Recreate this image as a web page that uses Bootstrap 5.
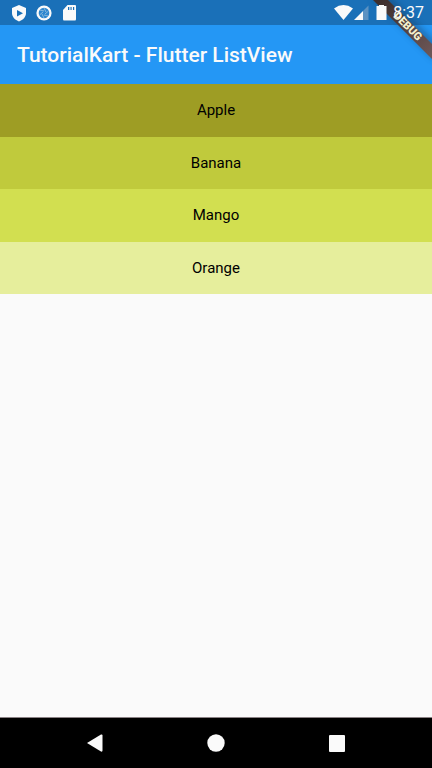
<!DOCTYPE html>
<html lang="en">
<head>
<meta charset="utf-8">
<meta name="viewport" content="width=device-width, initial-scale=1">
<title>TutorialKart - Flutter ListView</title>
<link href="https://cdn.jsdelivr.net/npm/bootstrap@5.3.0/dist/css/bootstrap.min.css" rel="stylesheet">
<style>
  body { font-family: Roboto, "Liberation Sans", sans-serif; background: #fafafa; color: #000; }
  .status-bar { height: 25px; background: #1a70b8; padding: 0 8px 0 11px; color: #fafafa; }
  .status-time { font-size: 16px; line-height: 25px; font-weight: 400; }
  .status-icons { gap: 9px; }
  .status-right { gap: 6px; z-index: 2; }
  .app-bar { height: 59px; background: #2497f5; padding: 0 17px; }
  .app-title { font-size: 21px; line-height: 24px; font-weight: 500; color: #fafafa; }
  .fruit-list { height: 210px; font-size: 15px; line-height: 20px; }
  .fruit-list .list-group-item { color: #000; }
  .fruit-list .lime-900 { background: #9e9d24; }
  .fruit-list .lime-600 { background: #c0ca3c; }
  .fruit-list .lime-400 { background: #d2df50; }
  .fruit-list .lime-200 { background: #e6ee9c; }
  .nav-keys { height: 51px; background: #000; border-top: 1px solid #8a8184; padding: 0 34px; }
  .nav-key { background: transparent; }
  .debug-banner { z-index: 1; pointer-events: none; }
  svg { display: block; }
</style>
</head>
<body>
<div class="d-flex flex-column min-vh-100 position-relative overflow-hidden">
  <div class="status-bar d-flex align-items-center justify-content-between">
    <div class="status-icons d-flex align-items-center">
      <svg width="16" height="18" viewBox="0 0 16 18" aria-hidden="true"><path fill="#fafafa" d="M8 1 15 4V9C15 13 12 16 8 17.500C4 16 1 13 1 9V4Z"/><path fill="#1a70b8" d="M6 6 12 9.300 6 12.500Z"/></svg>
      <svg width="16" height="16" viewBox="0 0 16 16" aria-hidden="true"><circle cx="8" cy="8" r="7.600" fill="#fafafa"/><circle cx="8" cy="8" r="5.300" fill="#2c86d0"/><g stroke="#c9dbe2" stroke-width=".6"><path d="M8 3 10 7M12.500 6 9 9M12 11 8 10M8 13 6 9M3.500 10 7 7M4 5 8 6"/></g></svg>
      <svg width="17" height="16" viewBox="-2 0 17 16" aria-hidden="true"><path fill="#fafafa" d="M4.500 0H12Q13 0 13 1V14Q13 15.500 12 15.500H1Q0 15.500 0 14V5Z"/><path fill="#1a70b8" d="M5 2H6.300V5H5ZM7.500 2H8.600V5H7.500ZM10 2H11.200V5H10Z"/></svg>
    </div>
    <div class="status-right d-flex align-items-center position-relative">
      <div class="d-flex">
        <svg width="20" height="15" viewBox="0 0 20 15" aria-hidden="true"><path fill="#fafafa" d="M0 3.500Q9.500-3.300 19 3.500L9.500 15Z"/></svg>
        <svg width="15" height="15" viewBox="0 0 15 15" aria-hidden="true"><path fill="#fafafa" d="M0 15 9 6V15Z"/><path fill="#5c92c2" d="M9 6 14.500 .500V15H9Z"/></svg>
      </div>
      <svg width="12" height="15" viewBox="-1 0 12 15" aria-hidden="true"><path fill="#fafafa" d="M3 0H8V1H10.500V15H.500V1H3Z"/></svg>
      <span class="status-time">8:37</span>
    </div>
  </div>

  <header class="app-bar d-flex align-items-center">
    <h1 class="app-title m-0 text-nowrap">TutorialKart - Flutter ListView</h1>
  </header>

  <main class="flex-grow-1">
    <ul class="fruit-list list-group list-group-flush text-center">
      <li class="list-group-item lime-900 flex-fill border-0 p-0 d-flex align-items-center justify-content-center">Apple</li>
      <li class="list-group-item lime-600 flex-fill border-0 p-0 d-flex align-items-center justify-content-center">Banana</li>
      <li class="list-group-item lime-400 flex-fill border-0 p-0 d-flex align-items-center justify-content-center">Mango</li>
      <li class="list-group-item lime-200 flex-fill border-0 p-0 d-flex align-items-center justify-content-center">Orange</li>
    </ul>
  </main>

  <nav class="nav-keys row g-0 align-items-center" aria-label="System navigation">
    <div class="col d-flex justify-content-center"><button type="button" class="nav-key border-0 p-2" aria-label="Back"><svg width="16" height="18" viewBox="0 0 16 18" aria-hidden="true"><path fill="#fafafa" d="M0 9 14 .500Q15.500 0 15.500 1.500V16.500Q15.500 18 14 17.500Z"/></svg></button></div>
    <div class="col d-flex justify-content-center"><button type="button" class="nav-key border-0 p-2" aria-label="Home"><svg width="18" height="18" viewBox="0 0 18 18" aria-hidden="true"><circle cx="9" cy="9" r="8.700" fill="#fafafa"/></svg></button></div>
    <div class="col d-flex justify-content-center"><button type="button" class="nav-key border-0 p-2" aria-label="Overview"><svg width="16" height="17" viewBox="0 0 16 17" aria-hidden="true"><rect width="16" height="17" rx="1" fill="#fafafa"/></svg></button></div>
  </nav>

  <svg class="debug-banner position-absolute top-0 end-0" width="72" height="72" viewBox="0 0 72 72" role="img" aria-label="Debug">
    <defs>
      <filter id="soft" x="-20%" y="-20%" width="140%" height="140%"><feGaussianBlur stdDeviation="3"/></filter>
      <linearGradient id="band" gradientUnits="userSpaceOnUse" x1="20" y1="0" x2="72" y2="52"><stop offset="0" stop-color="#3d2e2c"/><stop offset=".5" stop-color="#54413f"/><stop offset="1" stop-color="#6b5657"/></linearGradient>
    </defs>
    <path d="M11-3H31L75 41V61Z" fill="#123a5c" opacity=".4" filter="url(#soft)"/>
    <path d="M13 0H28L72 44V59Z" fill="url(#band)"/>
    <text transform="translate(48 26) rotate(45)" text-anchor="middle" y="4" font-family="Roboto, sans-serif" font-size="11" font-weight="900" fill="#f4f2cf">DEBUG</text>
  </svg>
</div>
<script src="https://cdn.jsdelivr.net/npm/bootstrap@5.3.0/dist/js/bootstrap.bundle.min.js"></script>
</body>
</html>
